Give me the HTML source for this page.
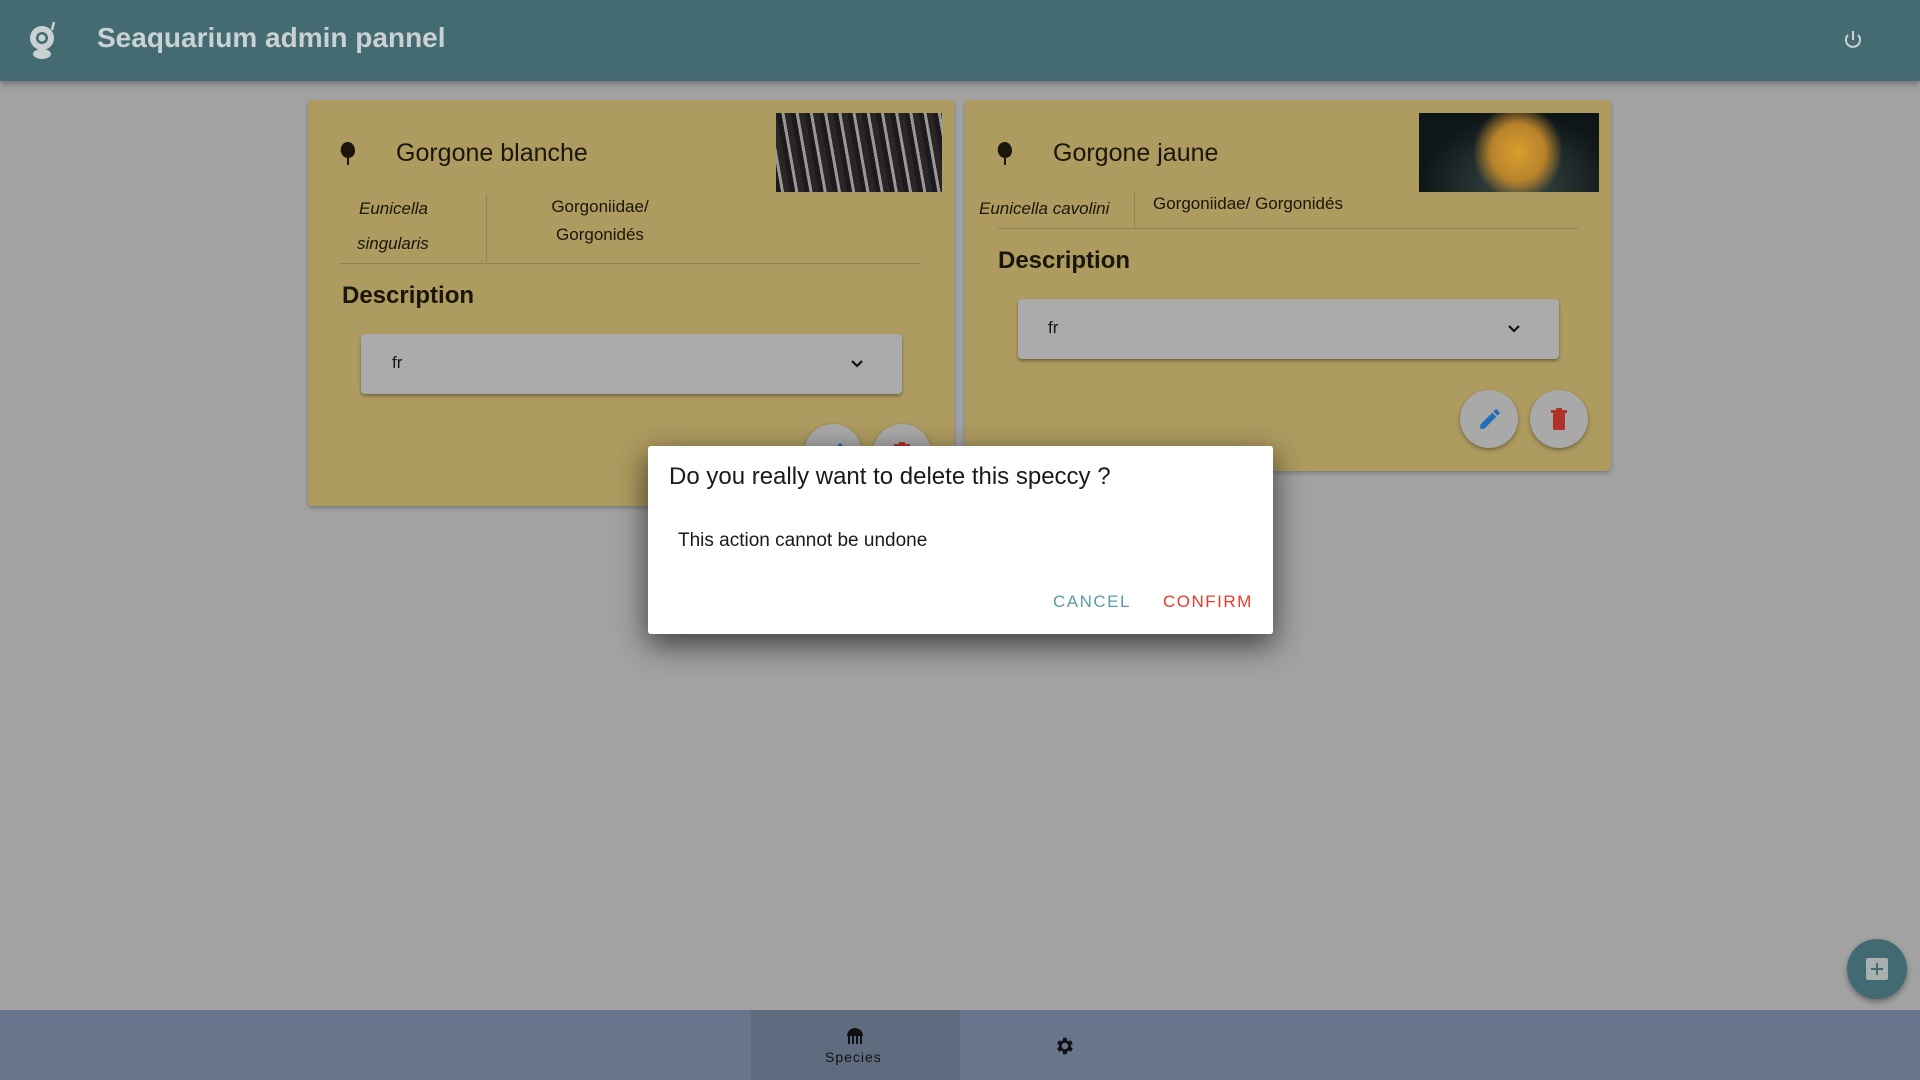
<!DOCTYPE html>
<html><head><meta charset="utf-8"><style>
*{margin:0;padding:0;box-sizing:border-box}
body{width:1920px;height:1080px;overflow:hidden;background:#a2a2a2;font-family:"Liberation Sans",sans-serif;position:relative}
.abs{position:absolute}
.hdr{left:0;top:0;width:1920px;height:81px;background:#446a72;box-shadow:0 3px 6px rgba(0,0,0,.3)}
.title{left:97px;top:22px;font-size:28px;font-weight:bold;color:#c9d1d3}
.card{background:#ae9b5f;border-radius:4px;box-shadow:0 2px 4px rgba(0,0,0,.25)}
.t{font-size:25px;color:#1a160c}
.it{font-style:italic;font-size:17px;color:#1a160c}
.s{font-size:17px;color:#1a160c}
.desc{font-size:24px;font-weight:bold;color:#1a160c}
.sel{background:#ababab;border-radius:4px;box-shadow:0 2px 3px rgba(0,0,0,.35)}
.btn{width:58px;height:58px;border-radius:50%;background:#a9a9a9;box-shadow:0 2px 4px rgba(0,0,0,.35)}
.dlg{left:648px;top:446px;width:625px;height:188px;background:#fff;border-radius:3px;box-shadow:0 10px 30px rgba(0,0,0,.35)}
</style></head><body>
<div class="abs hdr"></div>
<svg class="abs" style="left:24px;top:18px" width="40" height="42" viewBox="0 0 40 42"><circle cx="18" cy="20" r="12" fill="#c9d1d3"/><circle cx="18" cy="20" r="6" fill="#446a72"/><circle cx="18" cy="20" r="3.5" fill="#c9d1d3"/><ellipse cx="18" cy="36" rx="9" ry="5" fill="#c9d1d3"/><path d="M30 4 L28 12" stroke="#c9d1d3" stroke-width="2.5"/></svg>
<div class="abs title">Seaquarium admin pannel</div>
<svg class="abs" style="left:1841px;top:28px" width="24" height="24" viewBox="0 0 24 24"><path d="M12 3v9" stroke="#c9d1d3" stroke-width="2" fill="none"/><path d="M7 7a7 7 0 1 0 10 0" stroke="#c9d1d3" stroke-width="2" fill="none"/></svg>

<div class="abs card" style="left:308px;top:100px;width:646px;height:406px"></div>
<div class="abs" style="left:776px;top:113px;width:166px;height:79px;background:repeating-linear-gradient(80deg,#1c1a1e 0 5px,#9a9894 5px 8px,#2a2628 8px 14px),#333"></div>
<svg class="abs" style="left:338px;top:140px" width="20" height="26" viewBox="0 0 20 26"><path d="M10 2C4 2 2 8 3 12c1 4 4 6 7 6 3 0 7-2 7-7S14 2 10 2z" fill="#1a160c"/><path d="M10 15v10" stroke="#1a160c" stroke-width="2"/></svg>
<div class="abs t" style="left:396px;top:139px">Gorgone blanche</div>
<div class="abs it" style="left:359px;top:199px">Eunicella</div>
<div class="abs it" style="left:357px;top:234px">singularis</div>
<div class="abs" style="left:486px;top:194px;width:1px;height:68px;background:#948253"></div>
<div class="abs s" style="left:540px;top:193px;width:120px;text-align:center;line-height:28px">Gorgoniidae/ Gorgonidés</div>
<div class="abs" style="left:340px;top:263px;width:581px;height:1px;background:#948253"></div>
<div class="abs desc" style="left:342px;top:282px">Description</div>
<div class="abs sel" style="left:361px;top:334px;width:541px;height:60px"></div>
<div class="abs s" style="left:392px;top:353px">fr</div>
<svg class="abs" style="left:850px;top:357px" width="14" height="14" viewBox="0 0 14 14"><path d="M2 4l5 5 5-5" stroke="#111" stroke-width="2.2" fill="none"/></svg>
<div class="abs btn" style="left:804px;top:424px"></div>
<div class="abs btn" style="left:873px;top:424px"></div>
<svg class="abs" style="left:821px;top:440px" width="26" height="26" viewBox="0 0 24 24"><path d="M3 17.25V21h3.75L17.8 9.94l-3.75-3.75L3 17.25zM20.7 7.04a1 1 0 0 0 0-1.41l-2.34-2.34a1 1 0 0 0-1.41 0l-1.83 1.83 3.75 3.75 1.83-1.83z" fill="#1f6fb8"/></svg>
<svg class="abs" style="left:890px;top:440px" width="24" height="26" viewBox="0 0 24 26"><rect x="6" y="7" width="12" height="17" rx="1" fill="#b0302a"/><rect x="4" y="4" width="16" height="3" fill="#b0302a"/><rect x="9" y="2" width="6" height="3" fill="#b0302a"/></svg>

<div class="abs card" style="left:965px;top:100px;width:646px;height:371px"></div>
<div class="abs" style="left:1419px;top:113px;width:180px;height:79px;background:radial-gradient(ellipse 25% 60% at 55% 50%,#d8a030 0,#b8822a 60%,transparent 100%),radial-gradient(ellipse at 55% 90%,#3a4a48 0,#0e1618 70%)"></div>
<svg class="abs" style="left:995px;top:140px" width="20" height="26" viewBox="0 0 20 26"><path d="M10 2C4 2 2 8 3 12c1 4 4 6 7 6 3 0 7-2 7-7S14 2 10 2z" fill="#1a160c"/><path d="M10 15v10" stroke="#1a160c" stroke-width="2"/></svg>
<div class="abs t" style="left:1053px;top:139px">Gorgone jaune</div>
<div class="abs it" style="left:979px;top:199px">Eunicella cavolini</div>
<div class="abs" style="left:1134px;top:193px;width:1px;height:35px;background:#948253"></div>
<div class="abs s" style="left:1153px;top:194px">Gorgoniidae/ Gorgonidés</div>
<div class="abs" style="left:998px;top:228px;width:580px;height:1px;background:#948253"></div>
<div class="abs desc" style="left:998px;top:247px">Description</div>
<div class="abs sel" style="left:1018px;top:299px;width:541px;height:60px"></div>
<div class="abs s" style="left:1048px;top:318px">fr</div>
<svg class="abs" style="left:1507px;top:322px" width="14" height="14" viewBox="0 0 14 14"><path d="M2 4l5 5 5-5" stroke="#111" stroke-width="2.2" fill="none"/></svg>
<div class="abs btn" style="left:1460px;top:390px"></div>
<div class="abs btn" style="left:1530px;top:390px"></div>
<svg class="abs" style="left:1477px;top:406px" width="26" height="26" viewBox="0 0 24 24"><path d="M3 17.25V21h3.75L17.8 9.94l-3.75-3.75L3 17.25zM20.7 7.04a1 1 0 0 0 0-1.41l-2.34-2.34a1 1 0 0 0-1.41 0l-1.83 1.83 3.75 3.75 1.83-1.83z" fill="#1f6fb8"/></svg>
<svg class="abs" style="left:1547px;top:406px" width="24" height="26" viewBox="0 0 24 26"><rect x="6" y="7" width="12" height="17" rx="1" fill="#b0302a"/><rect x="4" y="4" width="16" height="3" fill="#b0302a"/><rect x="9" y="2" width="6" height="3" fill="#b0302a"/></svg>

<div class="abs dlg"></div>
<div class="abs" style="left:669px;top:463px;font-size:24px;color:#1a1a1a">Do you really want to delete this speccy ?</div>
<div class="abs" style="left:678px;top:530px;font-size:19px;color:#1a1a1a">This action cannot be undone</div>
<div class="abs" style="left:1053px;top:592px;font-size:17px;letter-spacing:1.5px;color:#5b9aa6">CANCEL</div>
<div class="abs" style="left:1163px;top:592px;font-size:17px;letter-spacing:1.5px;color:#e8392c">CONFIRM</div>

<div class="abs" style="left:0;top:1010px;width:1920px;height:70px;background:#68758d"></div>
<div class="abs" style="left:751px;top:1010px;width:209px;height:70px;background:#5f6b7f"></div>
<svg class="abs" style="left:844px;top:1026px" width="22" height="20" viewBox="0 0 22 20"><path d="M3 10a8 8 0 0 1 16 0z" fill="#111"/><path d="M5 10v8M9 10v8M13 10v8M17 10v8" stroke="#111" stroke-width="2"/></svg>
<div class="abs" style="left:825px;top:1049px;font-size:14px;letter-spacing:1px;color:#111">Species</div>
<svg class="abs" style="left:1053px;top:1035px" width="22" height="22" viewBox="0 0 24 24"><path fill="#111" d="M19.4 13a7.5 7.5 0 0 0 0-2l2.1-1.6-2-3.5-2.5 1a7 7 0 0 0-1.7-1L15 3h-4l-.4 2.9a7 7 0 0 0-1.7 1l-2.5-1-2 3.5L6.6 11a7.5 7.5 0 0 0 0 2l-2.1 1.6 2 3.5 2.5-1a7 7 0 0 0 1.7 1L11 21h4l.4-2.9a7 7 0 0 0 1.7-1l2.5 1 2-3.5zM13 15.5a3.5 3.5 0 1 1 0-7 3.5 3.5 0 0 1 0 7z"/></svg>
<div class="abs" style="left:1847px;top:939px;width:60px;height:60px;border-radius:50%;background:#426a72;box-shadow:0 3px 6px rgba(0,0,0,.35)"></div>
<div class="abs" style="left:1866px;top:958px;width:22px;height:22px;background:#a9b0b0;border-radius:2px"></div>
<div class="abs" style="left:1871px;top:968px;width:12px;height:2px;background:#426a72"></div>
<div class="abs" style="left:1876px;top:963px;width:2px;height:12px;background:#426a72"></div>
<div class="abs" style="left:648px;top:446px;width:625px;height:188px;background:#fff;border-radius:3px;box-shadow:0 10px 30px rgba(0,0,0,.35)"></div>
<div class="abs" style="left:669px;top:463px;font-size:24px;color:#1a1a1a">Do you really want to delete this speccy ?</div>
<div class="abs" style="left:678px;top:530px;font-size:19px;color:#1a1a1a">This action cannot be undone</div>
<div class="abs" style="left:1053px;top:592px;font-size:17px;letter-spacing:1.5px;color:#5b9aa6">CANCEL</div>
<div class="abs" style="left:1163px;top:592px;font-size:17px;letter-spacing:1.5px;color:#e8392c">CONFIRM</div>
</body></html>
